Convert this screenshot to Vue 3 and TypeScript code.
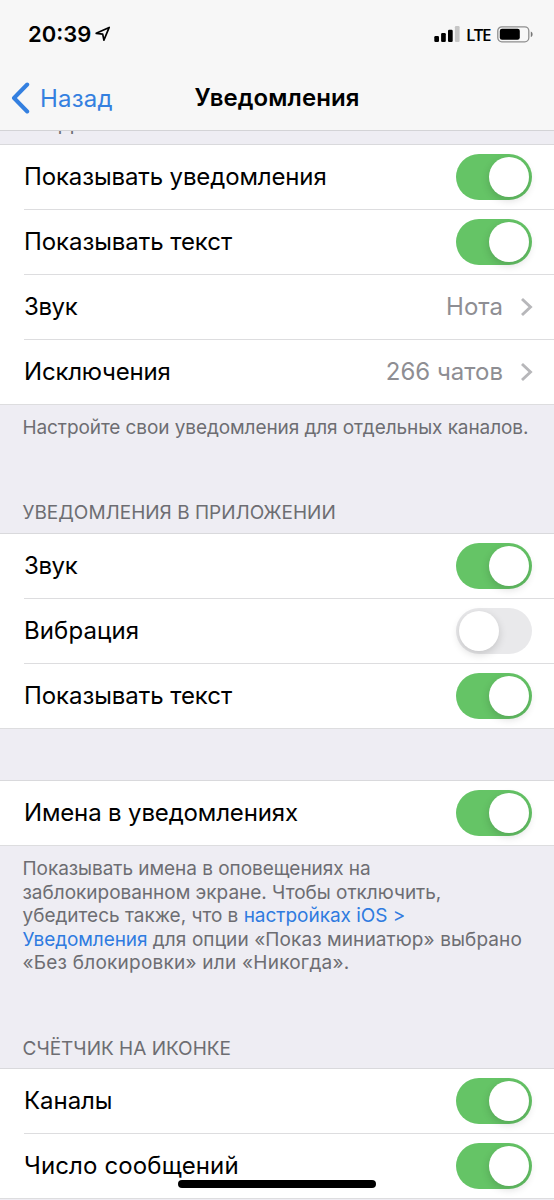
<script setup lang="ts">
interface Row {
  label: string
  spacing: number
  on?: boolean
  value?: string
}

interface Section {
  id: string
  title: string
  rows: Row[]
}

const sections: Section[] = [
  {
    id: 'channels',
    title: 'УВЕДОМЛЕНИЯ ОТ КАНАЛОВ',
    rows: [
      { label: 'Показывать уведомления', spacing: -0.13, on: true },
      { label: 'Показывать текст', spacing: -0.07, on: true },
      { label: 'Звук', spacing: -0.4, value: 'Нота' },
      { label: 'Исключения', spacing: -0.2, value: '266 чатов' },
    ],
  },
  {
    id: 'app',
    title: 'УВЕДОМЛЕНИЯ В ПРИЛОЖЕНИИ',
    rows: [
      { label: 'Звук', spacing: -0.4, on: true },
      { label: 'Вибрация', spacing: 0.1, on: false },
      { label: 'Показывать текст', spacing: -0.07, on: true },
    ],
  },
  { id: 'names', title: '', rows: [{ label: 'Имена в уведомлениях', spacing: -0.15, on: true }] },
  {
    id: 'badge',
    title: 'СЧЁТЧИК НА ИКОНКЕ',
    rows: [
      { label: 'Каналы', spacing: -0.05, on: true },
      { label: 'Число сообщений', spacing: 0.13, on: true },
    ],
  },
]
</script>

<template>
  <div class="screen">
    <header class="top">
      <div class="status">
        <span class="time">20:39</span>
        <svg class="loc" width="16" height="16" viewBox="0 0 16 16">
          <path d="M1.2 7.3 14.2 1.4 8.9 14.2 7.7 8.1Z" fill="none" stroke="#000" stroke-width="1.7" stroke-linejoin="round" />
        </svg>
        <span class="grow"></span>
        <svg class="signal" width="26" height="16" viewBox="0 0 26 16">
          <rect x="0.3" y="10" width="4.7" height="6" rx="1.2" />
          <rect x="7.1" y="7" width="4.7" height="9" rx="1.2" />
          <rect x="14" y="3.7" width="4.7" height="12.3" rx="1.2" />
          <rect x="20.9" y="0" width="4.7" height="16" rx="1.2" fill="#c6c6c6" />
        </svg>
        <span class="lte">LTE</span>
        <svg class="battery" width="37" height="17" viewBox="0 0 37 17">
          <rect x="0.8" y="0.8" width="31" height="15" rx="4" fill="none" stroke="#8e8e8e" stroke-width="1.3" />
          <rect x="2.8" y="2.8" width="20" height="11" rx="2.2" />
          <path d="M33.8 5.5c2.4.8 2.4 4.8 0 5.6Z" fill="#777" />
        </svg>
      </div>
      <nav class="nav">
        <svg class="back-icon" width="20" height="32" viewBox="0 0 20 32">
          <path d="M16.2 2.5 3 16 16.2 29.5" fill="none" stroke="#3480e0" stroke-width="4" stroke-linecap="round" stroke-linejoin="round" />
        </svg>
        <span class="back">Назад</span>
        <h1 class="title">Уведомления</h1>
      </nav>
    </header>

    <main class="content">
      <section v-for="s in sections" :key="s.id" :class="['section', s.id]">
        <h2 v-if="s.title" class="caption">{{ s.title }}</h2>
        <div class="group">
          <div v-for="r in s.rows" :key="r.label" class="row">
            <span class="label" :style="{ letterSpacing: r.spacing + 'px' }">{{ r.label }}</span>
            <template v-if="r.value">
              <span class="value">{{ r.value }}</span>
              <svg class="chevron" width="13" height="20" viewBox="0 0 13 20">
                <path d="M2 2 10.5 10 2 18" fill="none" stroke="#b7b7ba" stroke-width="2.9" />
              </svg>
            </template>
            <span v-else :class="['switch', { on: r.on }]"><span class="knob"></span></span>
          </div>
        </div>
        <p v-if="s.id === 'channels'" class="note">
          <span class="line single">Настройте свои уведомления для отдельных каналов.</span>
        </p>
        <p v-if="s.id === 'names'" class="note">
          <span class="line first">Показывать имена в оповещениях на</span>
          <span class="line">заблокированном экране. Чтобы отключить,</span>
          <span class="line">убедитесь также, что в <a class="link">настройках iOS &gt;</a></span>
          <span class="line fourth"><a class="link narrow">Уведомления</a> для опции «Показ миниатюр» выбрано</span>
          <span class="line fifth">«Без блокировки» или «Никогда».</span>
        </p>
      </section>
    </main>
    <div class="home"></div>
  </div>
</template>

<style>
html,
body {
  margin: 0;
  overflow: hidden;
}
</style>

<style scoped>
.screen {
  position: relative;
  width: 554px;
  height: 1200px;
  overflow: hidden;
  display: flex;
  flex-direction: column;
  background: #eeedf3;
  color: #000;
  font-family: Inter, 'Noto Sans', sans-serif;
}
.top {
  position: relative;
  z-index: 1;
  box-sizing: border-box;
  flex: none;
  height: 131px;
  border-bottom: 1px solid #d3d3d6;
  background: #f7f7f7;
}
.status {
  display: flex;
  align-items: center;
  height: 68px;
  padding: 0 20px 0 28px;
}
.time {
  font-size: 22px;
  font-weight: 600;
}
.loc {
  margin-left: 4px;
}
.grow {
  flex: 1;
}
.lte {
  width: 27px;
  margin: 0 4px 0 6px;
  font-family: 'Open Sans', sans-serif;
  font-size: 17px;
  font-weight: 600;
  letter-spacing: -1.4px;
}
.nav {
  position: relative;
  display: flex;
  align-items: center;
  height: 60px;
  padding-left: 11px;
}
.back {
  margin: 0 0 0 9px;
  color: #3480e0;
  font-size: 24px;
  letter-spacing: 0.2px;
}
.title {
  position: absolute;
  left: 0;
  right: 0;
  margin: 0;
  padding-bottom: 1px;
  text-align: center;
  font-size: 24px;
  font-weight: 600;
  letter-spacing: 0.1px;
}
.content {
  flex: 1;
  margin-top: -35px;
}
.section {
  display: flex;
  flex-direction: column;
  box-sizing: border-box;
}
.caption {
  display: flex;
  align-items: flex-end;
  box-sizing: border-box;
  margin: 0;
  padding: 0 22.5px 8px;
  height: 48px;
  color: #6d6d72;
  font-size: 19px;
  line-height: 24px;
  font-weight: 400;
}
.channels .caption,
.badge .caption {
  padding-bottom: 7px;
}
.channels {
  height: 389px;
}
.app {
  height: 244px;
}
.names {
  height: 291px;
  padding-top: 51px;
}
.group {
  border-top: 1px solid #d9d9dc;
  background: #fff;
}
.row {
  position: relative;
  box-sizing: border-box;
  display: flex;
  align-items: center;
  height: 65px;
  padding: 0 22px 1px 24px;
}
.row::after {
  content: '';
  position: absolute;
  left: 24px;
  right: 0;
  bottom: 0;
  height: 1px;
  background: #dddddf;
}
.row:last-child::after {
  left: 0;
}
.label {
  flex: 1;
  padding-bottom: 2px;
  white-space: nowrap;
  font-size: 24px;
}
.value {
  padding-bottom: 2px;
  color: #8e8e93;
  font-size: 24px;
}
.chevron {
  margin: 0 -1px 0 17px;
}
.switch {
  box-sizing: border-box;
  display: flex;
  width: 76px;
  height: 46px;
  margin-bottom: 1px;
  padding: 3px;
  border-radius: 23px;
  background: #e9e9eb;
}
.switch.on {
  justify-content: flex-end;
  background: #65c466;
}
.knob {
  width: 40px;
  height: 40px;
  border-radius: 50%;
  background: #fff;
  box-shadow: 0 3px 8px rgba(0, 0, 0, 0.16);
}
.note {
  display: flex;
  flex-direction: column;
  margin: 0;
  padding: 11px 0 0 22.5px;
  color: #6d6d72;
  font-size: 19px;
  line-height: 23.6px;
}
.line {
  white-space: nowrap;
  letter-spacing: -0.02px;
}
.single {
  letter-spacing: -0.09px;
}
.first {
  letter-spacing: -0.05px;
}
.fourth {
  letter-spacing: 0.09px;
}
.fifth {
  letter-spacing: 0.23px;
}
.link {
  color: #2f7be0;
}
.narrow {
  letter-spacing: -0.1px;
}
.home {
  position: absolute;
  z-index: 2;
  left: 178px;
  bottom: 12px;
  width: 198px;
  height: 8px;
  border-radius: 4px;
  background: #000;
}
</style>
